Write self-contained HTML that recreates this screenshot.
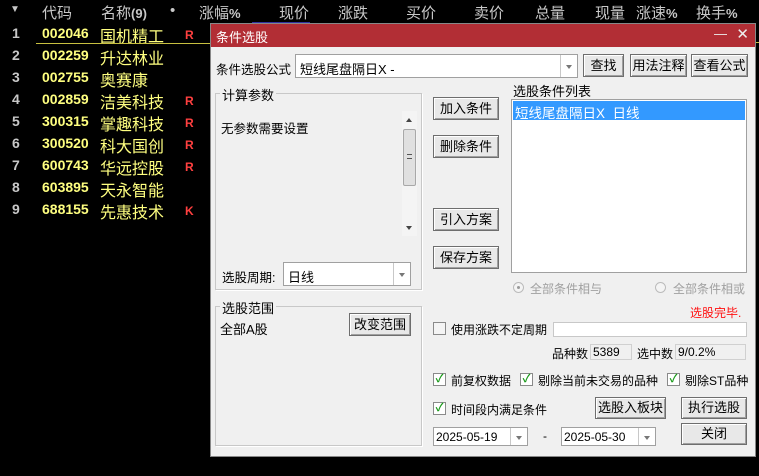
<!DOCTYPE html>
<html><head><meta charset="utf-8"><style>
*{margin:0;padding:0;box-sizing:border-box}
body{width:759px;height:476px;background:#000;position:relative;overflow:hidden;font-family:"Liberation Sans","Noto Sans CJK SC",sans-serif;font-size:12px;color:#000}
.a{position:absolute;white-space:nowrap}
.h{color:#c8c8c8;font-size:15px;top:2px}
.n{color:#c8c8c8;font-size:14px;font-weight:bold;left:12px}
.c{color:#ffff80;font-size:14px;font-weight:bold;left:42px}
.m{color:#ffff80;font-size:16px;left:100px}
.r{color:#ff4040;font-size:12px;font-weight:bold;left:185px}
.btn{position:absolute;background:#e8e8e8;border:1px solid #6e6e6e;box-shadow:inset 1px 1px 0 #fff,inset -1px -1px 0 #a0a0a0;text-align:center;font-size:13px}
.box{position:absolute;background:#fff;border:1px solid #a0a0a0}
.arr{position:absolute;right:0;top:0;bottom:0;width:17px;border-left:1px solid #c8c8c8;background:#fff}
.arr:after{content:"";position:absolute;left:5px;top:45%;border:3.5px solid transparent;border-top:4px solid #777}
.grp{position:absolute;border:1px solid #c8c8c8;box-shadow:1px 1px 0 #fff}
.gl{position:absolute;top:-9px;left:4px;background:#f0f0f0;padding:0 2px;font-size:13px}
.cb{position:absolute;width:13px;height:13px;border:1px solid #8a8a8a;background:#fff;color:#1a9a1a;font-size:11px;line-height:11px;text-align:center;font-weight:bold}
.t{font-size:12px}
</style></head><body>
<div class="a" style="left:10px;top:4px;color:#c8c8c8;font-size:10px">▼</div>
<div class="a h" style="left:42px">代码</div>
<div class="a h" style="left:101px">名称<b style="font-size:13px">(9)</b></div>
<div class="a h" style="left:170px">•</div>
<div class="a h" style="left:199px">涨幅<b style="font-size:13px">%</b></div>
<div class="a h" style="left:279px">现价</div>
<div style="position:absolute;left:252px;top:22px;width:58px;height:1px;background:#3030a0"></div>
<div class="a h" style="left:338px">涨跌</div>
<div class="a h" style="left:406px">买价</div>
<div class="a h" style="left:474px">卖价</div>
<div class="a h" style="left:535px">总量</div>
<div class="a h" style="left:595px">现量</div>
<div class="a h" style="left:636px">涨速<b style="font-size:13px">%</b></div>
<div class="a h" style="left:696px">换手<b style="font-size:13px">%</b></div>

<div class="a n" style="top:25px">1</div><div class="a c" style="top:25px">002046</div><div class="a m" style="top:23px">国机精工</div><div class="a r" style="top:28px">R</div>
<div style="position:absolute;left:36px;top:43px;width:174px;height:1px;background:#c8c040"></div>
<div class="a n" style="top:47px">2</div><div class="a c" style="top:47px">002259</div><div class="a m" style="top:45px">升达林业</div>
<div class="a n" style="top:69px">3</div><div class="a c" style="top:69px">002755</div><div class="a m" style="top:67px">奥赛康</div>
<div class="a n" style="top:91px">4</div><div class="a c" style="top:91px">002859</div><div class="a m" style="top:89px">洁美科技</div><div class="a r" style="top:94px">R</div>
<div class="a n" style="top:113px">5</div><div class="a c" style="top:113px">300315</div><div class="a m" style="top:111px">掌趣科技</div><div class="a r" style="top:116px">R</div>
<div class="a n" style="top:135px">6</div><div class="a c" style="top:135px">300520</div><div class="a m" style="top:133px">科大国创</div><div class="a r" style="top:138px">R</div>
<div class="a n" style="top:157px">7</div><div class="a c" style="top:157px">600743</div><div class="a m" style="top:155px">华远控股</div><div class="a r" style="top:160px">R</div>
<div class="a n" style="top:179px">8</div><div class="a c" style="top:179px">603895</div><div class="a m" style="top:177px">天永智能</div>
<div class="a n" style="top:201px">9</div><div class="a c" style="top:201px">688155</div><div class="a m" style="top:199px">先惠技术</div><div class="a r" style="top:204px">K</div>

<div style="position:absolute;left:210px;top:23px;width:546px;height:434px;background:#f0f0f0;border:1px solid #888">
<div style="position:absolute;left:0;top:0;right:0;height:23px;background:#b22e35;color:#fff;font-size:13px;padding:3px 0 0 5px">条件选股
<span style="position:absolute;right:28px;top:2px;font-size:13px;color:#eee">—</span><span style="position:absolute;right:6px;top:1px;font-size:15px;color:#eee">✕</span></div>
</div>
<div style="position:absolute;left:756px;top:42px;width:3px;height:1px;background:#c8c040"></div>

<div class="a" style="left:216px;top:59px;font-size:12.5px">条件选股公式</div>
<div class="box" style="left:295px;top:54px;width:283px;height:24px"><span class="a" style="left:4px;top:4px;font-size:13px">短线尾盘隔日X -</span><div class="arr"></div></div>
<div class="btn" style="left:583px;top:54px;width:41px;height:23px;line-height:21px">查找</div>
<div class="btn" style="left:630px;top:54px;width:57px;height:23px;line-height:21px">用法注释</div>
<div class="btn" style="left:691px;top:54px;width:57px;height:23px;line-height:21px">查看公式</div>

<div class="grp" style="left:215px;top:93px;width:207px;height:197px"><span class="gl">计算参数</span></div>
<div class="a" style="left:221px;top:118px;font-size:12.5px">无参数需要设置</div>
<div style="position:absolute;left:402px;top:111px;width:15px;height:125px;background:#f4f4f4">
<div style="position:absolute;left:4px;top:4px;border:3px solid transparent;border-bottom:4px solid #444"></div>
<div style="position:absolute;left:1px;top:18px;width:13px;height:57px;background:#e0e0e0;border:1px solid #a8a8a8;border-radius:2px"></div>
<div style="position:absolute;left:5px;top:43px;width:5px;height:5px;border-top:1px solid #555;border-bottom:1px solid #555"></div>
<div style="position:absolute;left:4px;top:115px;border:3px solid transparent;border-top:4px solid #444"></div>
</div>
<div class="a" style="left:222px;top:267px;font-size:12.5px">选股周期:</div>
<div class="box" style="left:283px;top:262px;width:128px;height:24px"><span class="a" style="left:4px;top:4px;font-size:13px">日线</span><div class="arr"></div></div>

<div class="grp" style="left:215px;top:306px;width:207px;height:140px"><span class="gl">选股范围</span></div>
<div class="a" style="left:220px;top:319px;font-size:13px">全部A股</div>
<div class="btn" style="left:349px;top:313px;width:62px;height:23px;line-height:21px">改变范围</div>

<div class="btn" style="left:433px;top:97px;width:66px;height:23px;line-height:21px">加入条件</div>
<div class="btn" style="left:433px;top:135px;width:66px;height:23px;line-height:21px">删除条件</div>
<div class="btn" style="left:433px;top:208px;width:66px;height:23px;line-height:21px">引入方案</div>
<div class="btn" style="left:433px;top:246px;width:66px;height:23px;line-height:21px">保存方案</div>

<div class="a" style="left:513px;top:81px;font-size:13px">选股条件列表</div>
<div class="box" style="left:511px;top:99px;width:236px;height:174px">
<div style="position:absolute;left:1px;top:1px;right:1px;height:19px;background:#3399ff;color:#fff;font-size:13.5px;padding:1px 0 0 2px">短线尾盘隔日X&nbsp; 日线</div></div>

<div style="position:absolute;left:513px;top:282px;width:11px;height:11px;border-radius:50%;border:1px solid #bbb;background:#f4f4f4"><div style="position:absolute;left:3px;top:3px;width:3px;height:3px;border-radius:50%;background:#999"></div></div>
<div class="a t" style="left:530px;top:280px;color:#a0a0a0">全部条件相与</div>
<div style="position:absolute;left:655px;top:282px;width:11px;height:11px;border-radius:50%;border:1px solid #bbb;background:#f4f4f4"></div>
<div class="a t" style="left:673px;top:280px;color:#a0a0a0">全部条件相或</div>

<div class="a t" style="left:690px;top:304px;color:#ff1010">选股完毕.</div>
<div class="cb" style="left:433px;top:322px;background:#f4f4f4"></div>
<div class="a t" style="left:451px;top:321px">使用涨跌不定周期</div>
<div class="box" style="left:553px;top:322px;width:194px;height:15px;border-color:#c8c8c8"></div>

<div class="a t" style="left:552px;top:345px">品种数</div>
<div class="box" style="left:590px;top:344px;width:42px;height:16px;background:#f0f0f0;border-color:#d0d0d0;padding-left:2px;font-size:12px;line-height:14px">5389</div>
<div class="a t" style="left:637px;top:345px">选中数</div>
<div class="box" style="left:675px;top:344px;width:71px;height:16px;background:#f0f0f0;border-color:#d0d0d0;padding-left:2px;font-size:12px;line-height:14px">9/0.2%</div>

<div class="cb" style="left:433px;top:373px">✓</div><div class="a t" style="left:451px;top:372px">前复权数据</div>
<div class="cb" style="left:520px;top:373px">✓</div><div class="a t" style="left:538px;top:372px">剔除当前未交易的品种</div>
<div class="cb" style="left:667px;top:373px">✓</div><div class="a t" style="left:685px;top:372px">剔除ST品种</div>

<div class="cb" style="left:433px;top:402px">✓</div><div class="a t" style="left:451px;top:401px">时间段内满足条件</div>
<div class="btn" style="left:595px;top:397px;width:71px;height:22px;line-height:20px">选股入板块</div>
<div class="btn" style="left:681px;top:397px;width:66px;height:22px;line-height:20px">执行选股</div>
<div class="btn" style="left:681px;top:423px;width:66px;height:22px;line-height:20px">关闭</div>

<div class="box" style="left:433px;top:427px;width:95px;height:19px"><span class="a" style="left:2px;top:2px;font-size:12px">2025-05-19</span><div class="arr"></div></div>
<div class="a" style="left:543px;top:429px">-</div>
<div class="box" style="left:561px;top:427px;width:95px;height:19px"><span class="a" style="left:2px;top:2px;font-size:12px">2025-05-30</span><div class="arr"></div></div>
</body></html>
